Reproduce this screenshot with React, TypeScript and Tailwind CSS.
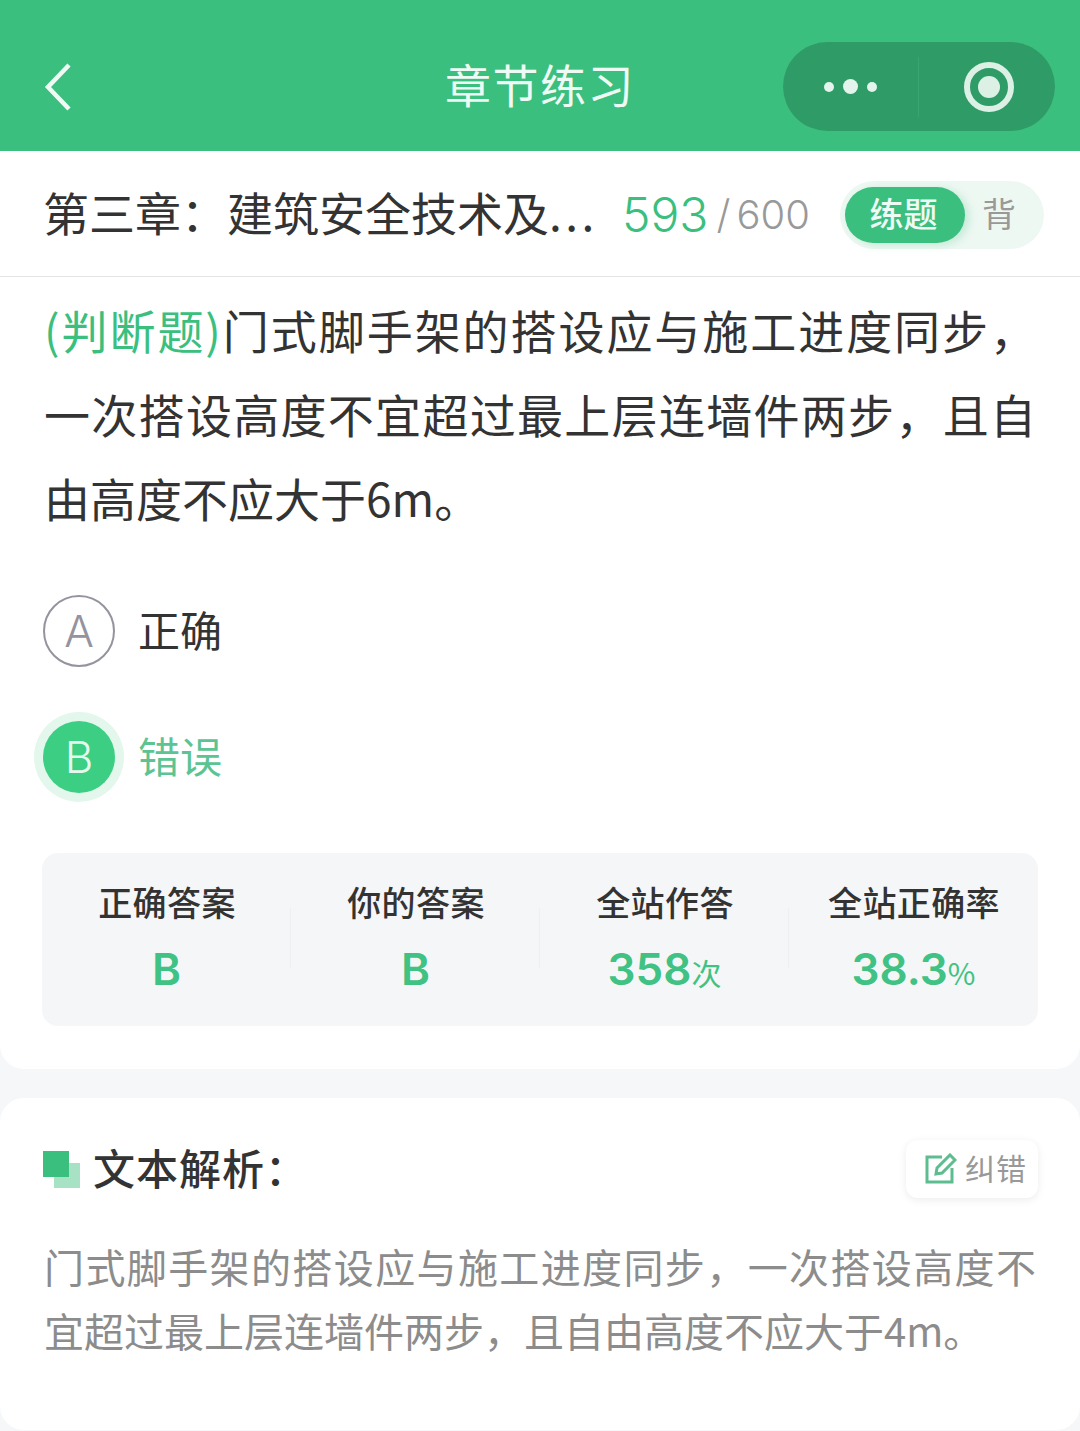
const cjk = "font-['Noto_Sans_CJK_SC','Noto_Sans',sans-serif]";

const stats = [
	{ label: "正确答案", value: "B", unit: "" },
	{ label: "你的答案", value: "B", unit: "" },
	{ label: "全站作答", value: "358", unit: "次" },
	{ label: "全站正确率", value: "38.3", unit: "%" },
];

function Header() {
	return (
		<header className="grid h-[151px] grid-cols-[1fr_auto_1fr] items-center bg-[#3bbf7e] px-[25px] pt-[22px]">
			<svg className="ml-[19px]" width="30" height="48" viewBox="0 0 30 48" fill="none" stroke="#f0faf5" strokeWidth="4.5">
				<path d="M25 2 L4 24 L25 46" />
			</svg>
			<div className="-translate-y-[4px] text-[46px] leading-none tracking-[1.5px] text-[#eefaf4]">章节练习</div>
			<div className="flex justify-end">
				<div className="flex h-[89px] w-[272px] items-center rounded-full bg-[#2f9c67]">
					<div className="flex h-[60px] w-[136px] items-center justify-center gap-[9px] border-r border-r-[#3aa571]">
						<span className="size-[10px] rounded-full bg-[#e4f4ec]" />
						<span className="size-[15px] rounded-full bg-[#e4f4ec]" />
						<span className="size-[10px] rounded-full bg-[#e4f4ec]" />
					</div>
					<div className="flex flex-1 items-center justify-center pl-[4px]">
						<div className="flex size-[50px] items-center justify-center rounded-full border-[6px] border-[#dcf0e6]">
							<span className="size-[22px] rounded-full bg-[#dcf0e6]" />
						</div>
					</div>
				</div>
			</div>
		</header>
	);
}

function TitleRow() {
	return (
		<div className="flex h-[126px] items-center border-b border-b-[#e4e4e4] pl-[43px] pr-[36px]">
			<div className="w-[579px] -translate-y-[3px] whitespace-nowrap text-[46px] leading-none text-[#333333]">
				第三章：建筑安全技术及<span className="tracking-[3.5px]">...</span>
			</div>
			<div className="flex w-[218px] translate-y-[1px] items-baseline whitespace-nowrap font-['Inter',sans-serif] font-light">
				<span className="text-[48px] leading-none text-[#3bbf7e]">593</span>
				<span className="ml-[8px] -translate-y-[3px] text-[40px] leading-none text-[#999999]">/</span>
				<span className="ml-[6px] -translate-y-[3px] text-[40px] leading-none text-[#999999]">600</span>
			</div>
			<div className="flex h-[68px] w-[204px] translate-y-[1px] items-center rounded-full bg-[#eef8f3] pl-[5px]">
				<div className="flex h-[56px] w-[120px] items-center justify-center rounded-full bg-[#3bbf7e] pb-[3px] pr-[3px] text-[34px] font-medium leading-none text-[#eefaf4] shadow-[4px_2px_8px_rgba(59,191,126,0.25)]">
					练题
				</div>
				<div className="ml-[17px] -translate-y-[2px] text-[34px] leading-none text-[#999999]">背</div>
			</div>
		</div>
	);
}

function Question() {
	return (
		<div className="pl-[44px] pr-[44px] pt-[10px] text-justify text-[46px] leading-[84px] text-[#333333]">
			<span className="text-[#3bbf7e]">(判断题)</span>门式脚手架的搭设应与施工进度同步，一次搭设高度不宜超过最上层连墙件两步，且自由高度不应大于6m。
		</div>
	);
}

function Options() {
	return (
		<div className="mt-[56px] flex flex-col gap-[54px] pl-[43px]">
			<div className="flex h-[72px] items-center gap-[23px]">
				<div className="flex size-[72px] items-center justify-center rounded-full border-2 border-[#95939e] font-['Inter',sans-serif] text-[44px] font-light leading-none text-[#95939e]">
					A
				</div>
				<div className="-translate-y-[2px] text-[42px] leading-none text-[#333333]">正确</div>
			</div>
			<div className="flex h-[72px] items-center gap-[23px]">
				<div className="flex size-[72px] items-center justify-center rounded-full bg-[#3ccf84] font-['Inter',sans-serif] text-[44px] font-light leading-none text-[#e4f8ee] shadow-[0_0_0_9px_#e3f7ec]">
					B
				</div>
				<div className="-translate-y-[2px] text-[42px] leading-none text-[#5cc493]">错误</div>
			</div>
		</div>
	);
}

function Stats() {
	return (
		<div className="mx-[42px] mt-[60px] grid h-[173px] grid-cols-4 rounded-[16px] bg-[#f5f6f7]">
			{stats.map((item, index) => (
				<div key={item.label} className="relative flex flex-col items-center pt-[27px]">
					<div className="pl-[1px] text-[34px] font-medium leading-[44px] tracking-[0.4px] text-[#333333]">{item.label}</div>
					<div className="mt-[20px] flex h-[50px] items-baseline font-['Inter',sans-serif] text-[44px] font-semibold leading-[50px] text-[#3fc283]">
						{item.value}
						{item.unit && (
							<span className={`${cjk} text-[30px] font-normal`}>{item.unit}</span>
						)}
					</div>
					{index < 3 && <span className="absolute right-0 top-[55px] h-[60px] w-px bg-[#eeeff0]" />}
				</div>
			))}
		</div>
	);
}

function Analysis() {
	return (
		<section className="mt-[29px] rounded-[24px] bg-white pt-[42px]">
			<div className="flex h-[58px] items-center justify-between pl-[43px] pr-[42px]">
				<div className="flex items-center gap-[13px]">
					<svg width="37" height="37" viewBox="0 0 37 37">
						<rect x="11" y="12" width="26" height="25" fill="#a6e2c3" />
						<rect x="0" y="0" width="26" height="26" fill="#3bbf7e" />
					</svg>
					<div className="-translate-y-[2px] text-[42px] font-medium leading-none tracking-[1px] text-[#333333]">文本解析：</div>
				</div>
				<div className="flex h-[58px] w-[132px] items-center gap-[8px] rounded-[12px] bg-white pl-[19px] shadow-[0_2px_8px_rgba(0,0,0,0.08)]">
					<svg width="32" height="32" viewBox="0 0 32 32" fill="none" stroke="#5dbd8f" strokeWidth="3">
						<path d="M17 4 H2 V29 H27 V15" />
						<path d="M11 21 L12 15 L25 2 L30 7 L17 20 Z" />
					</svg>
					<span className="-translate-y-[2px] text-[30px] leading-none tracking-[1px] text-[#999999]">纠错</span>
				</div>
			</div>
			<div className="pb-[68px] pl-[44px] pr-[44px] pt-[36px] text-justify text-[40px] leading-[64px] text-[#8c8c8c]">
				门式脚手架的搭设应与施工进度同步，一次搭设高度不宜超过最上层连墙件两步，且自由高度不应大于4m。
			</div>
		</section>
	);
}

export default function App() {
	return (
		<div className={`${cjk} h-[1431px] overflow-hidden bg-[#f6f7f8]`}>
			<Header />
			<div className="h-[918px] rounded-b-[24px] bg-white">
				<TitleRow />
				<Question />
				<Options />
				<Stats />
			</div>
			<Analysis />
		</div>
	);
}
